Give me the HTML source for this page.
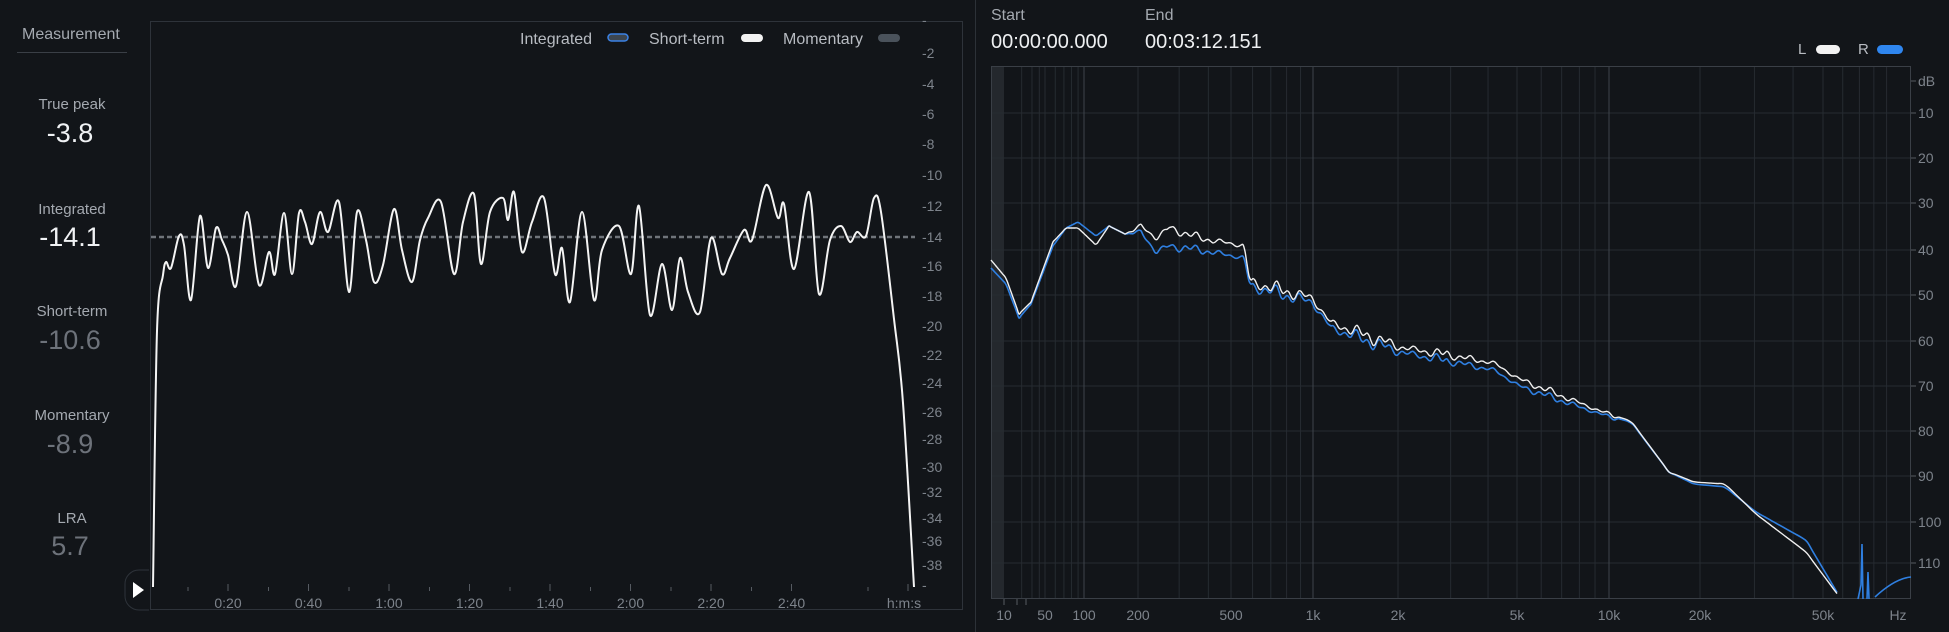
<!DOCTYPE html>
<html><head><meta charset="utf-8">
<style>
html,body{margin:0;padding:0;background:#121519;width:1949px;height:632px;overflow:hidden;font-family:"Liberation Sans",sans-serif;}
.t{position:absolute;white-space:nowrap;}
.lab{color:#a4a9b0;font-size:15px;width:144px;text-align:center;left:0;}
.val{font-size:27px;width:144px;text-align:center;left:-2px;}
</style></head><body>
<div class="t" style="left:22px;top:26px;font-size:16px;color:#a4a9b0;">Measurement</div>
<div style="position:absolute;left:17px;top:52px;width:110px;height:1px;background:#3a3f46"></div>
<div class="t lab" style="top:96px">True peak</div>
<div class="t val" style="top:118px;color:#f0f2f4">-3.8</div>
<div class="t lab" style="top:201px">Integrated</div>
<div class="t val" style="top:222px;color:#f0f2f4">-14.1</div>
<div class="t lab" style="top:303px">Short-term</div>
<div class="t val" style="top:325px;color:#6d727a">-10.6</div>
<div class="t lab" style="top:407px">Momentary</div>
<div class="t val" style="top:429px;color:#6d727a">-8.9</div>
<div class="t lab" style="top:510px">LRA</div>
<div class="t val" style="top:531px;color:#6d727a">5.7</div>
<div style="position:absolute;left:975px;top:0;width:1px;height:632px;background:#2c3137"></div>
<div class="t" style="left:991px;top:7px;font-size:16px;color:#a4a9b0">Start</div>
<div class="t" style="left:1145px;top:7px;font-size:16px;color:#a4a9b0">End</div>
<div class="t" style="left:991px;top:31px;font-size:20px;color:#eef0f2">00:00:00.000</div>
<div class="t" style="left:1145px;top:31px;font-size:20px;color:#eef0f2">00:03:12.151</div>
<svg id="s" width="1949" height="632" style="position:absolute;left:0;top:0" font-family="Liberation Sans, sans-serif"></svg>
<script>
var s=document.getElementById('s'),h='';
function L(x1,y1,x2,y2,c,w,extra){h+='<line x1="'+x1+'" y1="'+y1+'" x2="'+x2+'" y2="'+y2+'" stroke="'+c+'" stroke-width="'+(w||1)+'" '+(extra||'')+'/>';}
function T(x,y,t,c,sz,a){h+='<text x="'+x+'" y="'+y+'" fill="'+c+'" font-size="'+sz+'" text-anchor="'+(a||'start')+'">'+t+'</text>';}
function cr(p){var d='M'+p[0][0]+','+p[0][1];for(var i=0;i<p.length-1;i++){var p0=p[i-1]||p[i],p1=p[i],p2=p[i+1],p3=p[i+2]||p2;
d+=' C'+(p1[0]+(p2[0]-p0[0])/6).toFixed(1)+','+(p1[1]+(p2[1]-p0[1])/6).toFixed(1)+' '+(p2[0]-(p3[0]-p1[0])/6).toFixed(1)+','+(p2[1]-(p3[1]-p1[1])/6).toFixed(1)+' '+p2[0]+','+p2[1];}return d;}
h+='<rect x="150.5" y="21.5" width="812" height="588" fill="none" stroke="#2e333a"/>';
h+='<path d="M149,570 h-10 a14,14 0 0 0 -14,14 v12 a14,14 0 0 0 14,14 h10" fill="#121519" stroke="#2e333a"/>';
h+='<path d="M133,582 L144,590 L133,598 Z" fill="#fff"/>';
var ly=[[-2,53],[-4,84],[-6,114],[-8,144],[-10,175],[-12,206],[-14,237],[-16,266],[-18,296],[-20,326],[-22,355],[-24,383],[-26,412],[-28,439],[-30,467],[-32,492],[-34,518],[-36,541],[-38,565]];
ly.forEach(function(a){T(922,a[1]+5,a[0],'#7d838b',14);});
T(922,25,'-','#7d838b',14);T(922,590,'-','#7d838b',14);
var tl=['0:20','0:40','1:00','1:20','1:40','2:00','2:20','2:40'];
for(var i=0;i<8;i++){var x=228+i*80.5;T(x,608,tl[i],'#7d838b',14,'middle');L(x,584,x,591,'#555a61');L(x-40,587,x-40,591,'#555a61');}
L(868,587,868,591,'#555a61');L(908,584,908,591,'#555a61');
T(904,608,'h:m:s','#7d838b',14,'middle');
L(151,237,915,237,'#6f747a',2.5,'stroke-dasharray="5,3"');
T(520,44,'Integrated','#b8bcc2',16);h+='<rect x="608" y="34" width="20" height="7" rx="3.5" fill="#3d4650" stroke="#3b82e6" stroke-width="1.5"/>';
T(649,44,'Short-term','#b8bcc2',16);h+='<rect x="741" y="34" width="22" height="8" rx="4" fill="#f2f2f2"/>';
T(783,44,'Momentary','#b8bcc2',16);h+='<rect x="878" y="34" width="22" height="8" rx="4" fill="#4a525b"/>';
var lp=[[153,587],[157,331],[163,275],[166,262],[171,268],[179,236],[184,245],[191,300],[200,216],[208,268],[216,228],[222,240],[228,255],[236,286],[247,212],[259,285],[269,252],[275,274],[284,213],[292,274],[299,213],[305,222],[312,244],[320,212],[328,232],[339,202],[349,292],[357,212],[366,240],[374,282],[383,265],[394,209],[402,250],[412,282],[420,240],[428,218],[441,202],[454,274],[463,222],[474,194],[481,264],[490,212],[503,198],[508,220],[514,192],[522,252],[532,222],[544,198],[555,274],[562,248],[570,302],[582,212],[594,300],[602,250],[619,226],[631,274],[639,206],[650,315],[662,264],[672,310],[680,258],[688,292],[700,312],[711,238],[722,274],[730,258],[744,230],[752,240],[766,185],[778,218],[784,204],[794,269],[809,192],[819,294],[830,240],[841,226],[850,242],[857,232],[866,236],[874,198],[881,212],[894,319],[903,403],[914,587]];
h+='<path d="'+cr(lp)+'" fill="none" stroke="#f4f4f4" stroke-width="2"/>';
var fa=[[10,1004],[50,1045],[100,1084],[200,1138],[500,1231],[1000,1313],[2000,1398],[5000,1517],[10000,1609],[20000,1700],[50000,1823],[100000,1898]];
function fx(f){var lf=Math.log10(f);for(var i=0;i<fa.length-1;i++){var a=Math.log10(fa[i][0]),b=Math.log10(fa[i+1][0]);if(lf<=b)return fa[i][1]+(lf-a)/(b-a)*(fa[i+1][1]-fa[i][1]);}return 1898;}
h+='<rect x="991" y="66" width="13" height="533" fill="#24282d"/>';
[113,158,203,250,295,341,386,431,476,522,563].forEach(function(y){L(991,y,1911,y,'#262b31');});
[20,30,40,60,70,80,90,200,300,400,600,700,800,900,2000,3000,4000,6000,7000,8000,9000,20000,30000,40000,60000,70000,80000,90000,50,500,5000,50000].forEach(function(f){var x=fx(f);if(x<1911)L(x,66,x,599,'#262b31');});
[100,1000,10000].forEach(function(f){L(fx(f),66,fx(f),599,'#3e434a');});
h+='<rect x="991.5" y="66.5" width="919" height="532" fill="none" stroke="#3a3f46"/>';
var db=[['dB',81],['10',113],['20',158],['30',203],['40',250],['50',295],['60',341],['70',386],['80',431],['90',476],['100',522],['110',563]];
db.forEach(function(a){T(1918,a[1]+5,a[0],'#7d838b',14);L(1911,a[1],1916,a[1],'#555a61');});
[['10',1004],['50',1045],['100',1084],['200',1138],['500',1231],['1k',1313],['2k',1398],['5k',1517],['10k',1609],['20k',1700],['50k',1823],['Hz',1898]].forEach(function(a){T(a[1],620,a[0],'#7d838b',14,'middle');});
[1004,1017,1026].forEach(function(x){L(x,599,x,605,'#555a61');});
T(1798,54,'L','#b8bcc2',15);h+='<rect x="1816" y="45" width="24" height="9" rx="4.5" fill="#f2f2f2"/>';
T(1858,54,'R','#b8bcc2',15);h+='<rect x="1877" y="45" width="26" height="9" rx="4.5" fill="#2f86ef"/>';
var wb=[[991,260],[1006,278],[1019,314],[1031,302],[1053,242],[1066,228],[1078,228],[1096,245],[1109,226],[1125,234],[1141,226],[1156,238],[1169,228],[1200,238],[1244,246],[1250,282],[1312,298],[1331,323],[1400,347],[1494,363],[1519,379],[1600,411],[1631,421],[1669,472],[1694,482],[1725,484],[1756,514],[1806,552],[1841,599]];
var bb=[[991,268],[1006,284],[1019,318],[1031,304],[1053,246],[1066,228],[1078,222],[1096,236],[1109,226],[1125,234],[1141,232],[1156,252],[1169,246],[1200,250],[1244,258],[1250,286],[1312,302],[1331,328],[1400,352],[1494,370],[1519,386],[1600,414],[1631,422],[1669,472],[1694,484],[1725,487],[1756,512],[1806,540],[1841,599]];
function interp(b,x){for(var i=0;i<b.length-1;i++)if(x<=b[i+1][0]){var t=(x-b[i][0])/(b[i+1][0]-b[i][0]);return b[i][1]+t*(b[i+1][1]-b[i][1]);}return 599;}
function spec(b,ph,amp){var p=[];for(var x=991;x<=1841;x+=(x<1620?2:6)){var y=interp(b,x);if(x>1130&&x<1620){var a=(x<1250?5:(x<1450?8:4))*amp;y+=a*(0.5*Math.sin(x*0.55+ph)+0.5*Math.sin(x*0.23+ph*2))*(0.7+0.3*Math.sin(x*0.07));}
p.push([x,+y.toFixed(1)]);}return p;}
h+='<path d="'+cr(spec(bb,0.3,1))+'" fill="none" stroke="#2f7fe0" stroke-width="1.6"/>';
h+='<path d="'+cr(spec(wb,0,1))+'" fill="none" stroke="#f0f0f0" stroke-width="1.4"/>';
h+='<path d="M1858,599 L1861,585 L1862,544 L1863,599 M1867,599 L1868,572 L1869,599 M1875,597 C1888,585 1900,578 1911,577" fill="none" stroke="#2f7fe0" stroke-width="1.6"/>';
s.innerHTML=h;
</script>
</body></html>
